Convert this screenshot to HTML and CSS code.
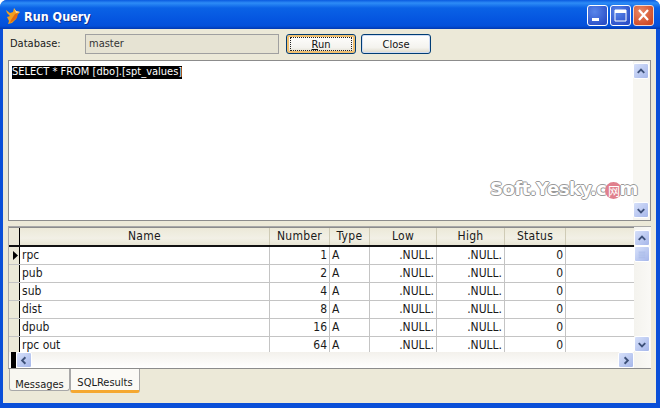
FILE: index.html
```html
<!DOCTYPE html>
<html>
<head>
<meta charset="utf-8">
<title>Run Query</title>
<link rel="stylesheet" href="styles.css">
</head>
<body>
<div class="window">
  <div class="titlebar">
    <svg class="fox" width="18" height="18" viewBox="0 0 18 18"><path d="M1 3l4 3 3-1 1-4 2 3 4 1-3 3-1 4-4 4-4 1 1-3-2-4 3-1-3-3z" fill="#f0a020"/><path d="M6 13l4-6 3-1-1 5-4 3-3 2z" fill="#e06a10"/><path d="M9 1l2 3 4 1-4 1z" fill="#ffe0a0"/></svg>
    <span class="title">Run Query</span>
    <div class="winbtns">
      <div class="winbtn"><svg width="19" height="19" viewBox="0 0 19 19"><rect x="4" y="12" width="7" height="3" fill="#fff"/></svg></div>
      <div class="winbtn"><svg width="19" height="19" viewBox="0 0 19 19"><path d="M4 4h11v11H4z" fill="none" stroke="#fff"/><rect x="4" y="4" width="11" height="3" fill="#fff"/></svg></div>
      <div class="winbtn close"><svg width="19" height="19" viewBox="0 0 19 19"><path d="M5 4l9 10M14 4L5 14" stroke="#fff" stroke-width="2.2" fill="none"/></svg></div>
    </div>
  </div>
  <div class="client">
    <div class="toolbar">
      <label class="dblabel">Database:</label>
      <div class="dbfield">master</div>
      <button class="btn default"><span class="focus"><u>R</u>un</span></button>
      <button class="btn">Close</button>
    </div>
    <div class="editor">
      <div class="editor-text"><span class="sel">SELECT * FROM [dbo].[spt_values]</span></div>
      <div class="vscroll editor-scroll">
        <div class="sb"><svg width="15" height="15" viewBox="0 0 15 15"><path class="arrow" d="M4 9l3.500-3.500L11 9"/></svg></div>
        <div class="sb"><svg width="15" height="15" viewBox="0 0 15 15"><path class="arrow" d="M4 6l3.500 3.500L11 6"/></svg></div>
      </div>
      <div class="watermark">Soft.Yesky.c<span class="stamp">网</span>m</div>
    </div>
    <div class="grid">
      <div class="grid-main">
        <div class="row head">
          <div class="ind"></div><div>Name</div><div>Number</div><div>Type</div><div>Low</div><div>High</div><div>Status</div><div class="fill"></div>
        </div>
        <div class="rows">
          <div class="row"><div class="ind"><svg width="5" height="9" viewBox="0 0 5 9"><path d="M0 0l5 4.500L0 9z" fill="#000"/></svg></div><div>rpc</div><div class="n">1</div><div>A</div><div class="n">.NULL.</div><div class="n">.NULL.</div><div class="n">0</div><div class="fill"></div></div>
          <div class="row"><div class="ind"></div><div>pub</div><div class="n">2</div><div>A</div><div class="n">.NULL.</div><div class="n">.NULL.</div><div class="n">0</div><div class="fill"></div></div>
          <div class="row"><div class="ind"></div><div>sub</div><div class="n">4</div><div>A</div><div class="n">.NULL.</div><div class="n">.NULL.</div><div class="n">0</div><div class="fill"></div></div>
          <div class="row"><div class="ind"></div><div>dist</div><div class="n">8</div><div>A</div><div class="n">.NULL.</div><div class="n">.NULL.</div><div class="n">0</div><div class="fill"></div></div>
          <div class="row"><div class="ind"></div><div>dpub</div><div class="n">16</div><div>A</div><div class="n">.NULL.</div><div class="n">.NULL.</div><div class="n">0</div><div class="fill"></div></div>
          <div class="row"><div class="ind"></div><div>rpc out</div><div class="n">64</div><div>A</div><div class="n">.NULL.</div><div class="n">.NULL.</div><div class="n">0</div><div class="fill"></div></div>
        </div>
        <div class="hscroll">
          <div class="blk"></div>
          <div class="sb"><svg width="15" height="15" viewBox="0 0 15 15"><path class="arrow" d="M9 4L5.500 7.500 9 11"/></svg></div>
          <div class="sb end"><svg width="15" height="15" viewBox="0 0 15 15"><path class="arrow" d="M6 4l3.500 3.500L6 11"/></svg></div>
        </div>
      </div>
      <div class="vscroll grid-scroll">
        <div class="sb"><svg width="15" height="15" viewBox="0 0 15 15"><path class="arrow" d="M4 9l3.500-3.500L11 9"/></svg></div>
        <div class="sb thumb"><svg width="15" height="15" viewBox="0 0 15 15"><path d="M4 5h7M4 7h7M4 9h7M4 11h7" stroke="#a9bbe8" fill="none"/></svg></div>
        <div class="sb last"><svg width="15" height="15" viewBox="0 0 15 15"><path class="arrow" d="M4 6l3.500 3.500L11 6"/></svg></div>
      </div>
    </div>
    <div class="tabs">
      <div class="tab">Messages</div>
      <div class="tab active">SQLResults</div>
    </div>
  </div>
</div>
</body>
</html>
```
FILE: styles.css
```css
* { box-sizing: border-box; }
html, body { margin: 0; padding: 0; background: #fff; }
body { width: 660px; height: 408px; overflow: hidden; font-family: "DejaVu Sans Condensed", "DejaVu Sans", sans-serif; font-stretch: condensed; font-size: 11px; color: #1a1a1a; }
.window { width: 660px; height: 408px; display: flex; flex-direction: column; padding: 0 4px 5px 3px; background: #0a4fd8; border-radius: 7px 7px 0 0; overflow: hidden; }
.titlebar { height: 29px; margin: 0 -4px 0 -3px; flex: none; display: flex; align-items: center; padding: 0 6px 0 5px; background: linear-gradient(#0a5ae0 0, #2d8cf6 3px, #0a62e6 8px, #0555e0 20px, #0450da 26px, #0238b0 29px); }
.fox { flex: none; margin-top: 2px; }
.title { margin: 3px 0 0 1px; font-family: "DejaVu Sans", sans-serif; font-stretch: condensed; font-weight: bold; font-size: 12.5px; color: #fff; text-shadow: 1px 1px 0 #0a2f90; }
.winbtns { margin-left: auto; display: flex; gap: 2px; margin-top: 2px; }
.winbtn { width: 21px; height: 21px; border: 1px solid #fff; border-radius: 3px; background: radial-gradient(circle at 35% 30%, #5a86ea, #2c50c8 80%); display: flex; align-items: center; justify-content: center; }
.winbtn.close { background: radial-gradient(circle at 35% 30%, #ea8a68, #cf4a26 80%); border-color: #f0d8d0; }
.client { flex: 1; background: #ece9d8; display: flex; flex-direction: column; padding: 5px 5px 0; min-height: 0; }
.toolbar { height: 20px; flex: none; display: flex; align-items: center; }
.dblabel { width: 77px; padding-left: 2px; margin-top: -1px; }
.dbfield { width: 194px; height: 20px; border: 1px solid #a0a0a0; background: #e6e3d3; padding: 2px 0 0 3px; color: #333; }
.btn { width: 70px; height: 20px; padding: 0; margin-left: 7px; border: 1px solid #003c74; border-radius: 3px; background: linear-gradient(#fff, #f4f3ee 70%, #dcd8c8); font: inherit; color: #111; display: flex; align-items: center; justify-content: center; }
.btn + .btn { margin-left: 5px; width: 70px; box-shadow: inset 0 0 0 1px #cfdcf4; }
.btn.default { box-shadow: inset 0 0 0 2px #f0c070; }
.focus { display: block; width: 62px; height: 14px; line-height: 13px; border: 1px dotted #222; }
.editor { position: relative; height: 161px; flex: none; margin-top: 6px; background: #fff; border: 1px solid #8c8c8c; display: flex; }
.editor-text { flex: 1; padding: 4px 0 0 3px; }
.sel { background: #000; color: #fff; display: inline-block; height: 13px; line-height: 12px; }
.vscroll { flex: none; width: 17px; display: flex; flex-direction: column; justify-content: space-between; padding-right: 1px; background: #f8f6f0; }
.editor-scroll { padding-top: 2px; padding-bottom: 2px; background: #f7f6f1; }
.sb { width: 16px; height: 16px; flex: none; display: flex; align-items: center; justify-content: center; border: 1px solid #fff; border-radius: 2px; background: linear-gradient(135deg, #d6e0fa, #a6b7ea); }
.arrow { fill: none; stroke: #3d5078; stroke-width: 2; }
.watermark { position: absolute; left: 481px; top: 118px; font: bold 18px/20px "DejaVu Sans", sans-serif; letter-spacing: -.5px; color: #fff; text-shadow: 1px 0 0 #999, -1px 0 0 #999, 0 1px 0 #999, 0 -1px 0 #999; white-space: nowrap; }
.stamp { display: inline-block; width: 17px; height: 17px; border-radius: 50%; background: #e07f8c; font: 12px/17px "Noto Sans CJK SC", sans-serif; text-align: center; text-shadow: none; vertical-align: -1px; margin: 0 -3px 0 -1px; letter-spacing: 0; }
.grid { height: 143px; flex: none; margin-top: 5px; background: #fff; border: 1px solid #a8a8a8; border-bottom-color: #8c8c8c; display: flex; font-size: 12px; }
.grid-main { width: 625px; flex: none; display: flex; flex-direction: column; min-height: 0; }
.row { display: grid; grid-template-columns: 11px 250px 60px 40px 67px 68px 61px 1fr; height: 18px; border-bottom: 1px solid #c4c4c4; flex: none; }
.row > div { padding: 0 2px; line-height: 17px; border-right: 1px solid #c4c4c4; white-space: nowrap; overflow: hidden; }
.row > .n { text-align: right; }
.row > .fill { border-right: 0; }
.row > .ind { padding: 0; background: #ece9d8; border-right: 1px solid #000; display: flex; align-items: center; justify-content: flex-end; padding-right: 1px; }
.row.head { height: 20px; border-top: 1px solid #8c8c8c; border-bottom: 2px solid #111; background: linear-gradient(#ece9d8, #f2f0e6 60%, #e8e5d4); letter-spacing: .3px; }
.row.head > div { text-align: center; border-right: 1px solid #cfcbb6; line-height: 17px; }
.row.head > .ind { border-right: 1px solid #000; }
.row.head > .fill { border-right: 0; }
.rows { flex: 1; min-height: 0; overflow: hidden; }
.hscroll { height: 16px; flex: none; display: flex; background: linear-gradient(#f3f1ec, #fff); }
.blk { width: 5px; margin-left: 2px; background: #000; }
.hscroll .end { margin-left: auto; margin-right: 0; }
.grid-scroll { background: linear-gradient(90deg, #f4f3ee, #faf9f6); justify-content: flex-start; padding-top: 3px; height: 141px; }
.thumb { height: 16px; }
.last { margin-top: auto; margin-bottom: 16px; }
.tabs { flex: 1; display: flex; align-items: flex-start; padding-left: 1px; }
.tab { width: 61px; height: 22px; background: #f8f7f1; border: 1px solid #a8a8a8; border-top: 0; border-radius: 0 0 3px 3px; text-align: center; line-height: 32px; }
.tab.active { width: 70px; height: 24px; line-height: 27px; border-bottom: 3px solid #f5a830; background: #fbfaf6; }
```
